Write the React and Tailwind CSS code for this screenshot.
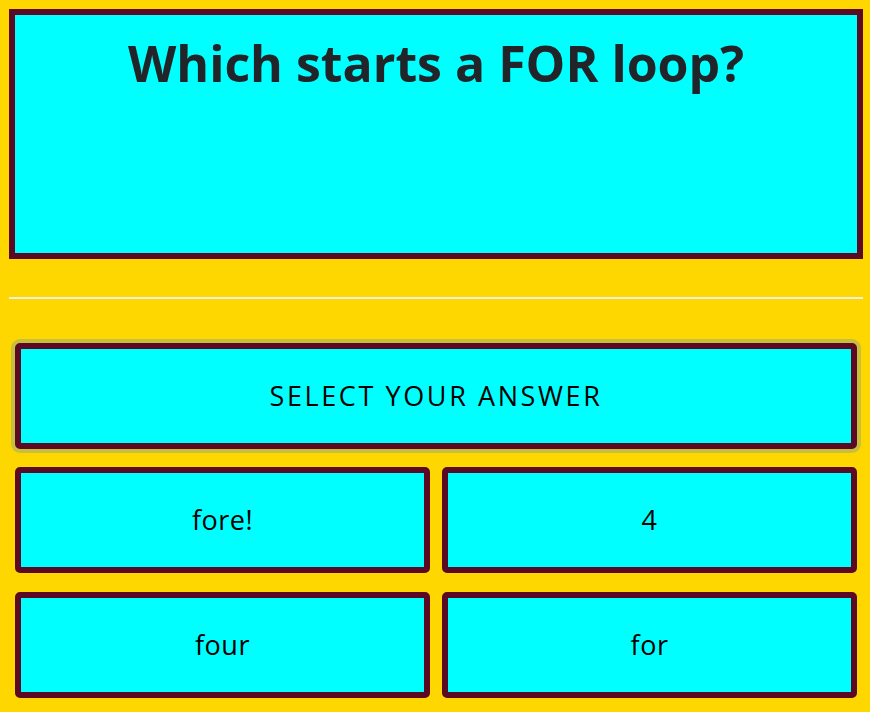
import React from 'react';

const answers = ['fore!', '4', 'four', 'for'];

const answerFont = { fontFamily: '"Open Sans", "Noto Sans", sans-serif' };

export default function App() {
  return (
    <div className="min-h-[712px] w-[870px] bg-[#ffd700] pt-[9px] pl-[9px] pr-[7px]">
      {/* Question card */}
      <div className="h-[250px] border-[6px] border-[#5c0a24] bg-[#00ffff] pt-[18px] text-center">
        <h1 className="text-[50px] font-bold leading-[1.2] text-[#212529]" style={{ fontFamily: '"Open Sans", sans-serif' }}>
          Which starts a FOR loop?
        </h1>
      </div>

      <hr className="mt-[38px] border-0 border-t-2 border-[#f0f0e8]" />

      <div className="mt-[44px] flex flex-col gap-[18px] px-[6px]">
        <div
          className="flex h-[106px] items-center justify-center rounded-[5px] border-[6px] border-[#5c0a24] bg-[#00ffff] text-[27px] tracking-[2.6px] text-black shadow-[0_0_0_4px_#c8bf3c]"
          style={answerFont}
        >
          SELECT YOUR ANSWER
        </div>

        <div className="grid grid-cols-2 gap-x-[12px] gap-y-[19px]">
          {answers.map((a) => (
            <div
              key={a}
              className="flex h-[106px] items-center justify-center rounded-[5px] border-[6px] border-[#5c0a24] bg-[#00ffff] text-[27px] tracking-[0.5px] text-black"
              style={answerFont}
            >
              {a}
            </div>
          ))}
        </div>
      </div>
    </div>
  );
}
